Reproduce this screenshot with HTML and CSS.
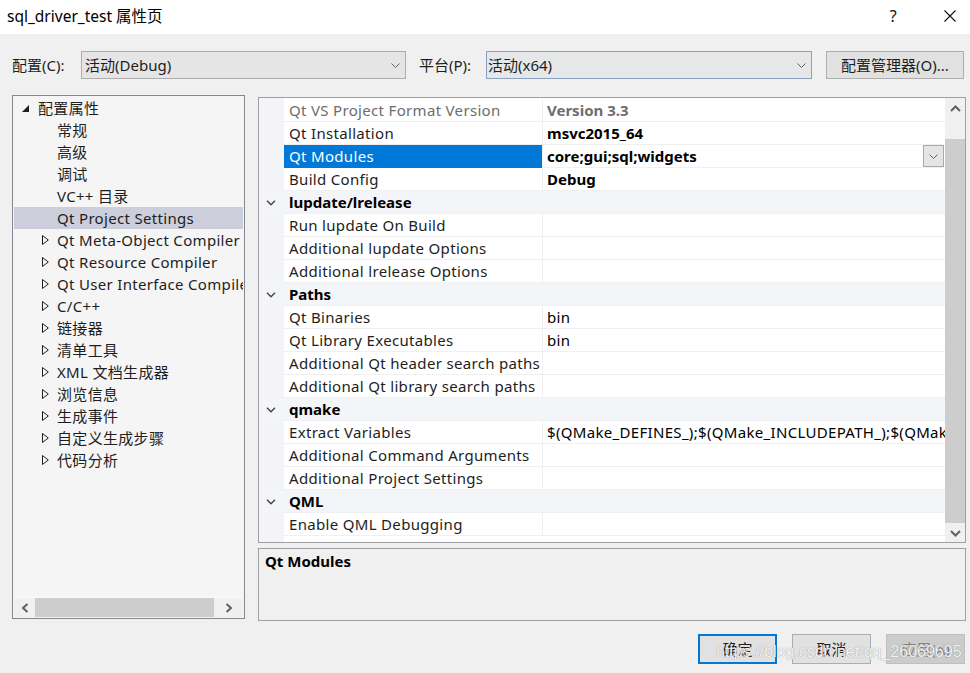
FILE: index.html
```html
<!DOCTYPE html>
<html lang="zh-CN">
<head>
<meta charset="utf-8">
<title>sql_driver_test 属性页</title>
<link rel="stylesheet" href="styles.css">
</head>
<body>
<div class="titlebar">
  <span class="title">sql_driver_test 属性页</span>
  <span class="help">?</span>
  <svg class="close" width="12" height="12" viewBox="0 0 12 12"><path d="M0.5 0.5 L11.5 11.5 M11.5 0.5 L0.5 11.5" stroke="#111" stroke-width="1.1" fill="none"/></svg>
</div>

<div class="toolbar">
  <span class="tlabel">配置(C):</span>
  <div class="combo combo-config"><span>活动(Debug)</span><svg class="chev" width="9" height="5" viewBox="0 0 9 5"><polyline points="0.5,0.5 4.5,4.5 8.5,0.5" stroke="#606060" fill="none"/></svg></div>
  <span class="tlabel tlabel-plat">平台(P):</span>
  <div class="combo combo-platform"><span>活动(x64)</span><svg class="chev" width="9" height="5" viewBox="0 0 9 5"><polyline points="0.5,0.5 4.5,4.5 8.5,0.5" stroke="#606060" fill="none"/></svg></div>
  <button class="btn btn-manager">配置管理器(O)...</button>
</div>

<div class="main">
  <div class="tree">
    <ul class="tree-list">
      <li class="tree-row lvl0"><span class="twisty"><svg width="7" height="7" viewBox="0 0 7 7"><polygon points="7,0 7,7 0,7" fill="#1e1e1e"/></svg></span>配置属性</li>
      <li class="tree-row lvl1"><span class="twisty"></span>常规</li>
      <li class="tree-row lvl1"><span class="twisty"></span>高级</li>
      <li class="tree-row lvl1"><span class="twisty"></span>调试</li>
      <li class="tree-row lvl1"><span class="twisty"></span>VC++ 目录</li>
      <li class="tree-row lvl1 selected"><span class="twisty"></span>Qt Project Settings</li>
      <li class="tree-row lvl1"><span class="twisty"><svg width="7" height="10" viewBox="0 0 7 10"><polygon points="0.5,0.5 6.3,5 0.5,9.5" fill="none" stroke="#1e1e1e"/></svg></span>Qt Meta-Object Compiler</li>
      <li class="tree-row lvl1"><span class="twisty"><svg width="7" height="10" viewBox="0 0 7 10"><polygon points="0.5,0.5 6.3,5 0.5,9.5" fill="none" stroke="#1e1e1e"/></svg></span>Qt Resource Compiler</li>
      <li class="tree-row lvl1"><span class="twisty"><svg width="7" height="10" viewBox="0 0 7 10"><polygon points="0.5,0.5 6.3,5 0.5,9.5" fill="none" stroke="#1e1e1e"/></svg></span>Qt User Interface Compiler</li>
      <li class="tree-row lvl1"><span class="twisty"><svg width="7" height="10" viewBox="0 0 7 10"><polygon points="0.5,0.5 6.3,5 0.5,9.5" fill="none" stroke="#1e1e1e"/></svg></span>C/C++</li>
      <li class="tree-row lvl1"><span class="twisty"><svg width="7" height="10" viewBox="0 0 7 10"><polygon points="0.5,0.5 6.3,5 0.5,9.5" fill="none" stroke="#1e1e1e"/></svg></span>链接器</li>
      <li class="tree-row lvl1"><span class="twisty"><svg width="7" height="10" viewBox="0 0 7 10"><polygon points="0.5,0.5 6.3,5 0.5,9.5" fill="none" stroke="#1e1e1e"/></svg></span>清单工具</li>
      <li class="tree-row lvl1"><span class="twisty"><svg width="7" height="10" viewBox="0 0 7 10"><polygon points="0.5,0.5 6.3,5 0.5,9.5" fill="none" stroke="#1e1e1e"/></svg></span>XML 文档生成器</li>
      <li class="tree-row lvl1"><span class="twisty"><svg width="7" height="10" viewBox="0 0 7 10"><polygon points="0.5,0.5 6.3,5 0.5,9.5" fill="none" stroke="#1e1e1e"/></svg></span>浏览信息</li>
      <li class="tree-row lvl1"><span class="twisty"><svg width="7" height="10" viewBox="0 0 7 10"><polygon points="0.5,0.5 6.3,5 0.5,9.5" fill="none" stroke="#1e1e1e"/></svg></span>生成事件</li>
      <li class="tree-row lvl1"><span class="twisty"><svg width="7" height="10" viewBox="0 0 7 10"><polygon points="0.5,0.5 6.3,5 0.5,9.5" fill="none" stroke="#1e1e1e"/></svg></span>自定义生成步骤</li>
      <li class="tree-row lvl1"><span class="twisty"><svg width="7" height="10" viewBox="0 0 7 10"><polygon points="0.5,0.5 6.3,5 0.5,9.5" fill="none" stroke="#1e1e1e"/></svg></span>代码分析</li>
    </ul>
    <div class="hscroll">
      <span class="hbtn"><svg width="8" height="10" viewBox="0 0 8 10"><polyline points="6.5,1 2,5 6.5,9" stroke="#606060" stroke-width="2" fill="none"/></svg></span>
      <span class="hthumb"></span>
      <span class="hspace"></span>
      <span class="hbtn"><svg width="8" height="10" viewBox="0 0 8 10"><polyline points="1.5,1 6,5 1.5,9" stroke="#606060" stroke-width="2" fill="none"/></svg></span>
    </div>
  </div>

  <div class="right">
    <div class="grid">
      <div class="grid-rows">
        <div class="row"><span class="gut"></span><span class="label ro">Qt VS Project Format Version</span><span class="value bold ro">Version 3.3</span></div>
        <div class="row"><span class="gut"></span><span class="label">Qt Installation</span><span class="value bold">msvc2015_64</span></div>
        <div class="row"><span class="gut"></span><span class="label sel">Qt Modules</span><span class="value bold">core;gui;sql;widgets<span class="dd"><svg width="9" height="5" viewBox="0 0 9 5"><polyline points="0.5,0.5 4.5,4.5 8.5,0.5" stroke="#606060" fill="none"/></svg></span></span></div>
        <div class="row"><span class="gut"></span><span class="label">Build Config</span><span class="value bold">Debug</span></div>
        <div class="row cat"><span class="gut"><svg width="10" height="6" viewBox="0 0 10 6"><polyline points="1,0.8 5,4.8 9,0.8" stroke="#444" stroke-width="1.4" fill="none"/></svg></span><span class="catname">lupdate/lrelease</span></div>
        <div class="row"><span class="gut"></span><span class="label">Run lupdate On Build</span><span class="value"></span></div>
        <div class="row"><span class="gut"></span><span class="label">Additional lupdate Options</span><span class="value"></span></div>
        <div class="row"><span class="gut"></span><span class="label">Additional lrelease Options</span><span class="value"></span></div>
        <div class="row cat"><span class="gut"><svg width="10" height="6" viewBox="0 0 10 6"><polyline points="1,0.8 5,4.8 9,0.8" stroke="#444" stroke-width="1.4" fill="none"/></svg></span><span class="catname">Paths</span></div>
        <div class="row"><span class="gut"></span><span class="label">Qt Binaries</span><span class="value">bin</span></div>
        <div class="row"><span class="gut"></span><span class="label">Qt Library Executables</span><span class="value">bin</span></div>
        <div class="row"><span class="gut"></span><span class="label">Additional Qt header search paths</span><span class="value"></span></div>
        <div class="row"><span class="gut"></span><span class="label">Additional Qt library search paths</span><span class="value"></span></div>
        <div class="row cat"><span class="gut"><svg width="10" height="6" viewBox="0 0 10 6"><polyline points="1,0.8 5,4.8 9,0.8" stroke="#444" stroke-width="1.4" fill="none"/></svg></span><span class="catname">qmake</span></div>
        <div class="row"><span class="gut"></span><span class="label">Extract Variables</span><span class="value">$(QMake_DEFINES_);$(QMake_INCLUDEPATH_);$(QMake_LIBS_);$(QMake_LIBPATH_)</span></div>
        <div class="row"><span class="gut"></span><span class="label">Additional Command Arguments</span><span class="value"></span></div>
        <div class="row"><span class="gut"></span><span class="label">Additional Project Settings</span><span class="value"></span></div>
        <div class="row cat"><span class="gut"><svg width="10" height="6" viewBox="0 0 10 6"><polyline points="1,0.8 5,4.8 9,0.8" stroke="#444" stroke-width="1.4" fill="none"/></svg></span><span class="catname">QML</span></div>
        <div class="row"><span class="gut"></span><span class="label">Enable QML Debugging</span><span class="value"></span></div>
      </div>
      <div class="vscroll">
        <span class="vbtn"><svg width="11" height="7" viewBox="0 0 11 7"><polyline points="1,6 5.5,1.5 10,6" stroke="#606060" stroke-width="2" fill="none"/></svg></span>
        <span class="vtrack"><span class="vthumb"></span></span>
        <span class="vbtn"><svg width="11" height="7" viewBox="0 0 11 7"><polyline points="1,1 5.5,5.5 10,1" stroke="#606060" stroke-width="2" fill="none"/></svg></span>
      </div>
    </div>
    <div class="desc"><span class="desc-title">Qt Modules</span></div>
  </div>
</div>

<div class="footer">
  <button class="btn fbtn btn-ok">确定</button>
  <button class="btn fbtn btn-cancel">取消</button>
  <button class="btn fbtn btn-apply">应用(A)</button>
  <span class="watermark">https://blog.csdn.net/qq_26069695</span>
</div>
</body>
</html>
```

FILE: styles.css
```css
* { box-sizing: border-box; }

html, body {
  margin: 0;
  padding: 0;
}

body {
  width: 970px;
  height: 673px;
  overflow: hidden;
  background: #f0f0f0;
  font-family: "Noto Sans", "Noto Sans CJK SC", sans-serif;
  font-size: 15px;
  letter-spacing: 0.32px;
  color: #1e1e1e;
}

/* Title bar */
.titlebar {
  height: 34px;
  background: #ffffff;
  display: flex;
  align-items: center;
  padding-left: 7px;
}
.title {
  flex: 1;
  font-size: 15.5px;
  letter-spacing: 0;
  color: #000;
  line-height: 20px;
  margin-top: -2px;
}
.help {
  font-size: 16px;
  color: #111;
  margin-right: 47px;
  line-height: 20px;
  margin-top: -2px;
}
.close {
  margin-right: 14px;
  margin-top: -2px;
}

/* Toolbar */
.toolbar {
  display: flex;
  align-items: center;
  height: 28px;
  margin-top: 17px;
  padding-left: 12px;
}
.tlabel {
  width: 69px;
  line-height: 20px;
  letter-spacing: 0;
}
.tlabel-plat {
  width: 67px;
  margin-left: 13px;
}
.combo {
  height: 28px;
  border: 1px solid #adadad;
  background: #e5e5e5;
  display: flex;
  align-items: center;
  justify-content: space-between;
  padding-left: 3px;
  padding-right: 5px;
  line-height: 20px;
  letter-spacing: 0;
}
.combo-config { width: 325px; }
.combo-platform {
  width: 326px;
  padding-left: 1px;
  border-color: #8aa2bf;
  background: #e6e7e9;
}
.chev { display: block; }

.btn {
  font-family: "Noto Sans", "Noto Sans CJK SC", sans-serif;
  font-size: 15px;
  letter-spacing: 0;
  color: #1e1e1e;
  background: #e1e1e1;
  border: 1px solid #adadad;
  padding: 0;
  margin: 0;
  line-height: 20px;
}
.btn-manager {
  width: 138px;
  height: 28px;
  margin-left: 14px;
}

/* Main */
.main {
  display: flex;
  align-items: flex-start;
  gap: 13px;
  margin-top: 16px;
  padding-left: 12px;
}

.tree {
  width: 233px;
  height: 524px;
  border: 1px solid #828790;
  background: #f5f5f5;
  padding: 1px;
  display: flex;
  flex-direction: column;
}
.tree-list {
  flex: 1;
  list-style: none;
  margin: 0;
  padding: 0;
  overflow: hidden;
}
.tree-row {
  height: 22px;
  display: flex;
  align-items: center;
  white-space: nowrap;
  line-height: 22px;
}
.tree-row.selected { background: #cccedb; }
.twisty {
  width: 16px;
  flex: none;
  display: flex;
  align-items: center;
}
.twisty svg { display: block; }
.lvl0 { padding-left: 8px; }
.lvl0 .twisty svg { margin-top: 1px; }
.lvl1 { padding-left: 27px; }
.lvl1 .twisty svg { margin-left: 1px; }

.hscroll {
  height: 20px;
  display: flex;
  align-items: stretch;
  background: #f0f0f0;
  border-top: 1px solid #fbfbfb;
}
.hbtn {
  width: 21px;
  display: flex;
  align-items: center;
  justify-content: center;
}
.hbtn:last-child { width: 29px; justify-content: center; }
.hthumb {
  width: 179px;
  background: #cdcdcd;
}
.hspace { flex: 1; }

/* Right column */
.right {
  width: 708px;
  margin-top: 2px;
  display: flex;
  flex-direction: column;
  gap: 5px;
}

.grid {
  height: 446px;
  border: 1px solid #a0a0a0;
  background: #fff;
  display: flex;
}
.grid-rows {
  width: 686px;
  padding-top: 1px;
  overflow: hidden;
  background: linear-gradient(to right, #f2f4f7 25px, #ffffff 25px);
}
.row {
  display: grid;
  grid-template-columns: 25px 258px 1fr;
  height: 23px;
  line-height: 22px;
}
.gut {
  display: flex;
  align-items: center;
  padding-left: 7px;
}
.label {
  border-bottom: 1px solid #f0f0f0;
  padding-left: 5px;
  white-space: nowrap;
  overflow: hidden;
}
.label.sel {
  background: #0078d7;
  color: #fff;
  border-bottom-color: #0078d7;
}
.value {
  position: relative;
  border-bottom: 1px solid #f0f0f0;
  border-left: 1px solid #f0f0f0;
  padding-left: 4px;
  white-space: nowrap;
  overflow: hidden;
  color: #000;
}
.bold { font-weight: bold; letter-spacing: 0; }
.ro { color: #6d6d6d; }
.value.ro { color: #6d6d6d; }

.dd {
  position: absolute;
  right: 1px;
  top: 0;
  width: 21px;
  height: 22px;
  border: 1px solid #a9a9a9;
  background: #e5e5e5;
  display: flex;
  align-items: center;
  justify-content: center;
}

.row.cat {
  background: #f3f5f9;
}
.catname {
  grid-column: 2 / 4;
  padding-left: 5px;
  font-weight: bold;
  letter-spacing: 0;
  color: #000;
  border-bottom: 1px solid #eef0f4;
}

.vscroll {
  width: 20px;
  background: #f0f0f0;
  display: flex;
  flex-direction: column;
}
.vbtn {
  height: 20px;
  display: flex;
  align-items: center;
  justify-content: center;
  flex: none;
}
.vtrack {
  flex: 1;
  display: flex;
  flex-direction: column;
}
.vthumb {
  margin-top: 21px;
  height: 384px;
  background: #cdcdcd;
}

.desc {
  height: 73px;
  border: 1px solid #a0a0a0;
  background: #f0f0f0;
  padding: 1px 6px;
  line-height: 22px;
}
.desc-title {
  font-weight: bold;
  letter-spacing: 0;
  color: #000;
}

/* Footer */
.footer {
  position: relative;
  display: flex;
  justify-content: flex-end;
  gap: 15px;
  margin-top: 13px;
  padding-right: 5px;
}
.fbtn {
  width: 79px;
  height: 30px;
}
.btn-ok { border: 2px solid #0078d7; }
.btn-apply {
  background: #cccccc;
  border-color: #bfbfbf;
  color: #838383;
}
.watermark {
  position: absolute;
  left: 716px;
  top: 8px;
  font-family: "Liberation Sans", Arial, sans-serif;
  font-size: 16px;
  letter-spacing: 0;
  line-height: 20px;
  color: rgba(255, 255, 255, 0.9);
  text-shadow: 0 0 1px rgba(90, 90, 90, 0.7);
  white-space: nowrap;
  pointer-events: none;
}
```
